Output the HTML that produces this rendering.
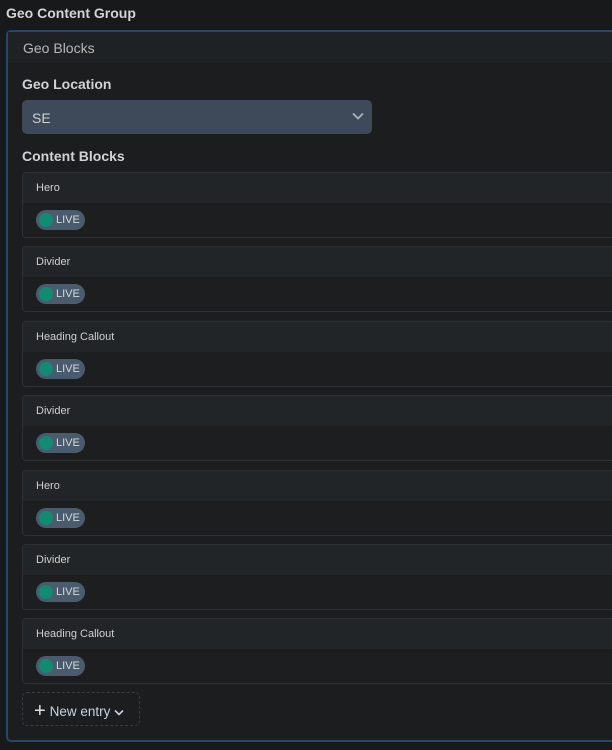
<!DOCTYPE html>
<html><head><style>
*{box-sizing:border-box;margin:0;padding:0}
body{width:612px;height:750px;background:#18191b;font-family:"Liberation Sans",sans-serif;position:relative;overflow:hidden;color:#d0d0d0}
.t{position:absolute;left:6px;top:5px;font-weight:bold;font-size:14px;color:#d4d4d4}
.panel{position:absolute;left:6px;top:30px;width:620px;height:712px;border:2px solid #274668;border-radius:5px;background:#1b1d1f}
.ph{position:absolute;left:0;top:0;right:0;height:31px;background:#1f2224;font-size:14px;color:#b8b8b8;padding:8px 0 0 15px}
.lbl{position:absolute;left:22px;font-weight:bold;font-size:14px;color:#d2d2d2}
.sel{position:absolute;left:22px;top:100px;width:350px;height:34px;background:#3e4a59;border-radius:5px;font-size:14px;color:#d0d0d0;padding:10px 0 0 10px}
.sel svg{position:absolute;right:8px;top:12px}
.card{position:absolute;left:22px;width:600px;height:66px;border:1px solid #2e3134;border-radius:4px;background:#1c1e20;overflow:hidden}
.ch{height:30px;background:#222527;font-size:11px;color:#cfcfcf;padding:9px 0 0 13px}
.b{position:absolute;left:13px;top:37px;width:49px;height:20px;border-radius:10px;background:#4b5b6e;font-size:11px;color:#d4d8dc;padding:4px 0 0 20px}
.b:before{content:"";position:absolute;left:3px;top:3px;width:14px;height:14px;border-radius:50%;background:#138a72}
.ne{position:absolute;left:22px;top:692px;width:118px;height:34px;border:1px dashed #3a3d40;border-radius:5px;font-size:14px;color:#c9d2dc;padding:6px 0 0 11px}
</style></head><body>
<div class="t">Geo Content Group</div>
<div class="panel"><div class="ph">Geo Blocks</div></div>
<div class="lbl" style="top:76px">Geo Location</div>
<div class="sel">SE<svg width="12" height="8" viewBox="0 0 12 8"><path d="M1 1.5l5 5 5-5" fill="none" stroke="#aab2bc" stroke-width="1.8"/></svg></div>
<div class="lbl" style="top:148px">Content Blocks</div>
<div class="card" style="top:172px"><div class="ch">Hero</div><div class="b">LIVE</div></div>
<div class="card" style="top:246px"><div class="ch">Divider</div><div class="b">LIVE</div></div>
<div class="card" style="top:321px"><div class="ch">Heading Callout</div><div class="b">LIVE</div></div>
<div class="card" style="top:395px"><div class="ch">Divider</div><div class="b">LIVE</div></div>
<div class="card" style="top:470px"><div class="ch">Hero</div><div class="b">LIVE</div></div>
<div class="card" style="top:544px"><div class="ch">Divider</div><div class="b">LIVE</div></div>
<div class="card" style="top:618px"><div class="ch">Heading Callout</div><div class="b">LIVE</div></div>
<div class="ne"><span style="font-size:20px;color:#e0e0e0;position:relative;top:1px">+</span> <span style="font-size:13.5px">New entry</span> <svg width="10" height="7" viewBox="0 0 10 7"><path d="M1 1.5l4 4 4-4" fill="none" stroke="#c9d2dc" stroke-width="1.6"/></svg></div>
</body></html>
